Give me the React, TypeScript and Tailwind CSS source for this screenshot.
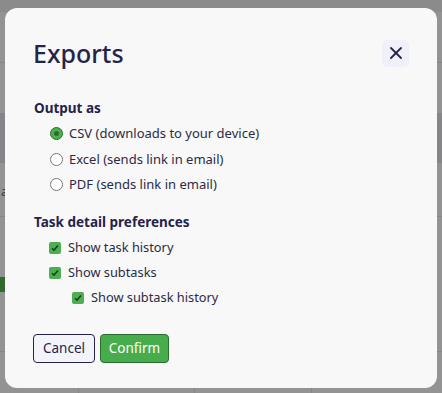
import { X } from "lucide-react";

/* Backdrop: the page behind the dimmed overlay */

function BackdropPage() {
  return (
    <div className="absolute inset-0 flex flex-col bg-[#939393]">
      <div className="h-[12px] bg-[#8b8b8b]" />
      <div className="h-[51px] border-b border-[#858585]" />
      <div className="h-[50px]" />
      <div className="h-[50px] bg-[#86868a]" />
      <div className="h-[54px] border-b border-[#868686] pl-[1px] pt-[22px] text-[13px] leading-none text-[#3a3a3a]">
        a
      </div>
      <div className="h-[60px]" />
      <div className="h-[15px] w-[20px] bg-[#2f6a2f]" />
      <div className="h-[60px] border-b border-[#868686]" />
      <div className="flex flex-1">
        <div className="w-[79px] border-r border-[#868686]" />
        <div className="w-[116px] border-r border-[#868686]" />
        <div className="w-[117px] border-r border-[#868686]" />
      </div>
    </div>
  );
}

/* Form bits */

function Radio({ label, checked = false }: { label: string; checked?: boolean }) {
  return (
    <label className="flex items-center gap-[6px] h-[25.5px]">
      <span
        className={
          checked
            ? "flex items-center justify-center w-[13px] h-[13px] rounded-full border border-[#2f6b31] bg-[#4caf50]"
            : "w-[13px] h-[13px] rounded-full border border-[#767676] bg-white"
        }
      >
        {checked && <span className="w-[5px] h-[5px] rounded-full bg-[#2f6b31]" />}
      </span>
      <span>{label}</span>
    </label>
  );
}

function Check({ label, className = "" }: { label: string; className?: string }) {
  return (
    <label className={`flex items-center gap-[7px] h-[25px] ${className}`}>
      <span className="flex items-center justify-center w-[12px] h-[12px] rounded-[2px] bg-[#4caf50]">
        <svg width="8" height="8" viewBox="0 0 8 8" fill="none">
          <path d="M1 4.2 L3 6.2 L7 1.6" stroke="#1f3a20" strokeWidth="1.6" />
        </svg>
      </span>
      <span>{label}</span>
    </label>
  );
}

/* Page */

export default function App() {
  return (
    <div
      className="relative w-[442px] h-[393px] overflow-hidden"
      style={{ fontFamily: '"Noto Sans", "Open Sans", sans-serif' }}
    >
      <BackdropPage />
      <div className="absolute left-[5px] top-[8px] w-[432px] h-[380px] rounded-[12px] bg-[#f8f8f8] px-[28px] pt-[28px] text-[#2c2a45]">
        {/* Header */}
        <div className="flex items-center justify-between">
          <h1 className="text-[25px] leading-[34px] font-medium text-[#25234a]">Exports</h1>
          <button className="flex items-center justify-center w-[27px] h-[27px] rounded-[5px] bg-[#f0f1f8] text-[#25234a]">
            <X size={20} strokeWidth={2.2} />
          </button>
        </div>

        {/* Output */}
        <h2 className="mt-[29px] text-[13.5px] leading-[18px] font-bold text-[#25234a] ml-[1px]">Output as</h2>
        <div className="mt-[4px] ml-[17px] text-[13px]">
          <Radio label="CSV (downloads to your device)" checked />
          <Radio label="Excel (sends link in email)" />
          <Radio label="PDF (sends link in email)" />
        </div>

        {/* Task details */}
        <h2 className="mt-[15px] text-[13.5px] leading-[18px] font-bold text-[#25234a] ml-[1px]">
          Task detail preferences
        </h2>
        <div className="mt-[5px] ml-[16px] text-[12.8px]">
          <Check label="Show task history" />
          <Check label="Show subtasks" />
          <Check label="Show subtask history" className="ml-[23px]" />
        </div>

        {/* Actions */}
        <div className="mt-[23px] flex gap-[5px] text-[13.5px]">
          <button className="w-[62px] h-[29px] rounded-[4px] border border-[#25234a] bg-[#f3f4fa] text-[#25234a]">
            Cancel
          </button>
          <button className="w-[69px] h-[29px] rounded-[4px] border border-[#2b6d2e] bg-[#47ad4c] text-white">
            Confirm
          </button>
        </div>
      </div>
    </div>
  );
}
